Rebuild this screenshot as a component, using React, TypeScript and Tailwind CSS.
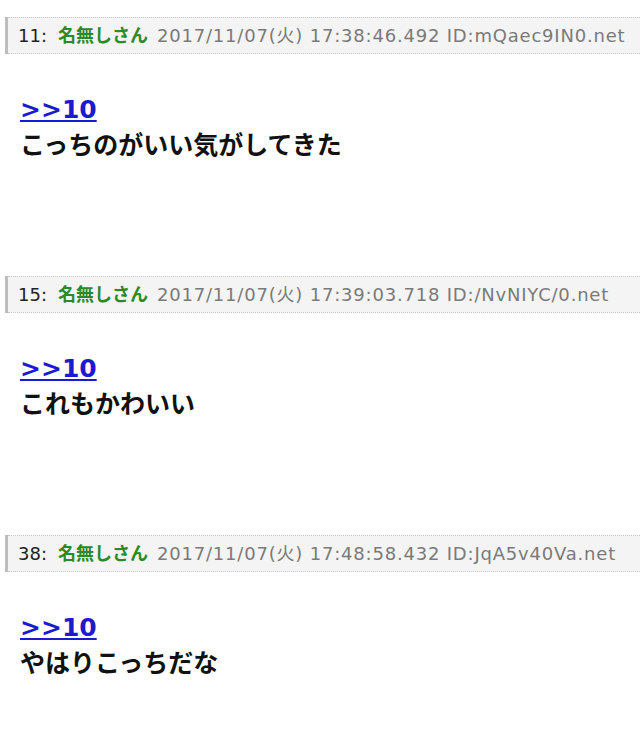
const posts = [
  { no: 11, date: '2017/11/07(火) 17:38:46.492', id: 'mQaec9IN0.net', body: 'こっちのがいい気がしてきた' },
  { no: 15, date: '2017/11/07(火) 17:39:03.718', id: '/NvNIYC/0.net', body: 'これもかわいい' },
  { no: 38, date: '2017/11/07(火) 17:48:58.432', id: 'JqA5v40Va.net', body: 'やはりこっちだな' },
]

const font = { fontFamily: '"DejaVu Sans", "Noto Sans CJK JP", sans-serif' }

export default function App() {
  return (
    <div className="w-[640px] h-[738px] bg-white overflow-hidden pt-[17px]" style={font}>
      {posts.map((p) => (
        <div key={p.no} className="h-[259px]">
          {/* ヘッダー */}
          <div className="ml-[5px] border-l-[3px] border-solid border-[#bdbdbd]">
            <div className="h-[37px] flex items-center bg-[#f4f4f4] border-y border-dotted border-[#c8c8c8] pl-[10px] text-[18px] whitespace-nowrap">
              <span className="text-[#222]">{p.no}:</span>
              <span className="text-[#2a8a2a] font-bold ml-[11px] mr-[9px]">名無しさん</span>
              <span className="text-[#7a7a7a] tracking-[0.8px]">{p.date} ID:{p.id}</span>
            </div>
          </div>
          <div className="pl-[20px] pt-[41px]">
            <a href="#" className="block text-[25px] leading-[30px] font-bold text-[#1a1ad0] underline underline-offset-2">&gt;&gt;10</a>
            <p className="text-[25px] leading-[36px] font-semibold text-[#111]" style={{ fontFamily: '"Noto Sans CJK JP", sans-serif' }}>{p.body}</p>
          </div>
        </div>
      ))}
    </div>
  )
}
